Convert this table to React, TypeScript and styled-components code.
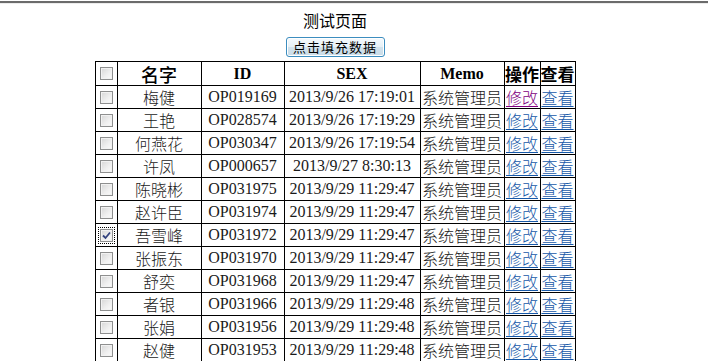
import styled, { createGlobalStyle } from "styled-components";

const GlobalStyle = createGlobalStyle`
  body {
    margin: 0;
    background: #ffffff;
    font-family: "Liberation Serif", "Noto Sans CJK SC", serif;
    color: #000000;
  }
`;

type Row = {
  name: string;
  id: string;
  time: string;
  checked?: boolean;
  visited?: boolean;
};

const rows: Row[] = [
  { name: "梅健", id: "OP019169", time: "2013/9/26 17:19:01", visited: true },
  { name: "王艳", id: "OP028574", time: "2013/9/26 17:19:29" },
  { name: "何燕花", id: "OP030347", time: "2013/9/26 17:19:54" },
  { name: "许凤", id: "OP000657", time: "2013/9/27 8:30:13" },
  { name: "陈晓彬", id: "OP031975", time: "2013/9/29 11:29:47" },
  { name: "赵许臣", id: "OP031974", time: "2013/9/29 11:29:47" },
  { name: "吾雪峰", id: "OP031972", time: "2013/9/29 11:29:47", checked: true },
  { name: "张振东", id: "OP031970", time: "2013/9/29 11:29:47" },
  { name: "舒奕", id: "OP031968", time: "2013/9/29 11:29:47" },
  { name: "者银", id: "OP031966", time: "2013/9/29 11:29:48" },
  { name: "张娟", id: "OP031956", time: "2013/9/29 11:29:48" },
  { name: "赵健", id: "OP031953", time: "2013/9/29 11:29:48" },
];

const colWidths = [22, 84, 83, 136, 84, 36, 35];

export default function App() {
  return (
    <>
      <GlobalStyle />
      <TopRule />
      <Page>
        <Title>测试页面</Title>
        <FillButton type="button">点击填充数据</FillButton>
        <Grid>
          <colgroup>
            {colWidths.map((w, i) => (
              <col key={i} style={{ width: w }} />
            ))}
          </colgroup>
          <thead>
            <tr>
              <HeadCell>
                <Check />
              </HeadCell>
              <HeadCell $cjk $big>名字</HeadCell>
              <HeadCell>ID</HeadCell>
              <HeadCell>SEX</HeadCell>
              <HeadCell>Memo</HeadCell>
              <HeadCell $cjk>操作</HeadCell>
              <HeadCell $cjk>查看</HeadCell>
            </tr>
          </thead>
          <tbody>
            {rows.map((r) => (
              <tr key={r.id}>
                <Cell>
                  <Check $checked={r.checked}>
                    {r.checked && (
                      <svg width="9" height="9" viewBox="0 0 9 9">
                        <path d="M1 4.5 L3.5 7 L8 1.5" fill="none" stroke="#33427e" strokeWidth="1.8" />
                      </svg>
                    )}
                  </Check>
                </Cell>
                <Cell $cjk>{r.name}</Cell>
                <Cell>{r.id}</Cell>
                <Cell>{r.time}</Cell>
                <Cell $cjk>系统管理员</Cell>
                <Cell $cjk>
                  <Link href="#" $visited={r.visited}>修改</Link>
                </Cell>
                <Cell $cjk>
                  <Link href="#">查看</Link>
                </Cell>
              </tr>
            ))}
          </tbody>
        </Grid>
      </Page>
    </>
  );
}

const TopRule = styled.div`
  margin-top: 1px;
  height: 2px;
  background: #6b6b6b;
  border-bottom: 1px solid #ececec;
`;

const Page = styled.div`
  width: 670px;
  display: flex;
  flex-direction: column;
  align-items: center;
`;

const Title = styled.div`
  margin-top: 6px;
  height: 20px;
  line-height: 20px;
  font-family: "Noto Sans CJK SC", sans-serif;
  font-size: 16px;
`;

const FillButton = styled.button`
  margin-top: 7px;
  width: 99px;
  height: 20px;
  padding: 0;
  border: 1px solid #3c8dbf;
  border-radius: 3px;
  background: linear-gradient(#f5fafd 0%, #e6f0f6 50%, #d2e2ec 51%, #c9dce8 100%);
  box-shadow: inset 0 0 0 1px #ffffff;
  font-family: "Noto Sans CJK SC", sans-serif;
  font-size: 13px;
  line-height: 16px;
  letter-spacing: 1px;
  color: #000000;
`;

const Grid = styled.table`
  margin-top: 4px;
  width: 480px;
  table-layout: fixed;
  border-collapse: collapse;
  border: 1px solid #000000;
`;

const HeadCell = styled.th<{ $cjk?: boolean; $big?: boolean }>`
  height: 23px;
  padding: 0;
  border: 1px solid #000000;
  text-align: center;
  white-space: nowrap;
  overflow: hidden;
  font-family: ${(p) => (p.$cjk ? `"Noto Sans CJK SC", sans-serif` : `"Liberation Serif", serif`)};
  font-size: ${(p) => (p.$big ? "18px" : p.$cjk ? "17px" : "16px")};
  font-weight: ${(p) => (p.$cjk && p.$big ? 500 : 700)};
  line-height: 20px;
`;

const Cell = styled.td<{ $cjk?: boolean }>`
  height: 22px;
  padding: 0;
  border: 1px solid #000000;
  text-align: center;
  white-space: nowrap;
  overflow: hidden;
  font-family: ${(p) => (p.$cjk ? `"Noto Sans CJK SC", sans-serif` : `"Liberation Serif", serif`)};
  font-size: 16px;
  font-weight: ${(p) => (p.$cjk ? 300 : 400)};
  line-height: 20px;
  color: #1a1a1a;
`;

const Check = styled.span<{ $checked?: boolean }>`
  display: inline-flex;
  align-items: center;
  justify-content: center;
  width: 13px;
  height: 13px;
  box-sizing: border-box;
  vertical-align: middle;
  border: 1px solid #8e8f8f;
  background: linear-gradient(135deg, #d6d6d6 0%, #f0f0f0 60%, #fbfbfb 100%);
  box-shadow: inset 0 0 0 1px #f2f2f2;
  outline: ${(p) => (p.$checked ? "1px dotted #000000" : "none")};
  outline-offset: 1px;
  margin-top: -2px;
`;

const Link = styled.a<{ $visited?: boolean }>`
  color: ${(p) => (p.$visited ? "#800080" : "#1658a8")};
  font-weight: inherit;
  text-decoration: underline;
  text-underline-offset: 2px;
`;
